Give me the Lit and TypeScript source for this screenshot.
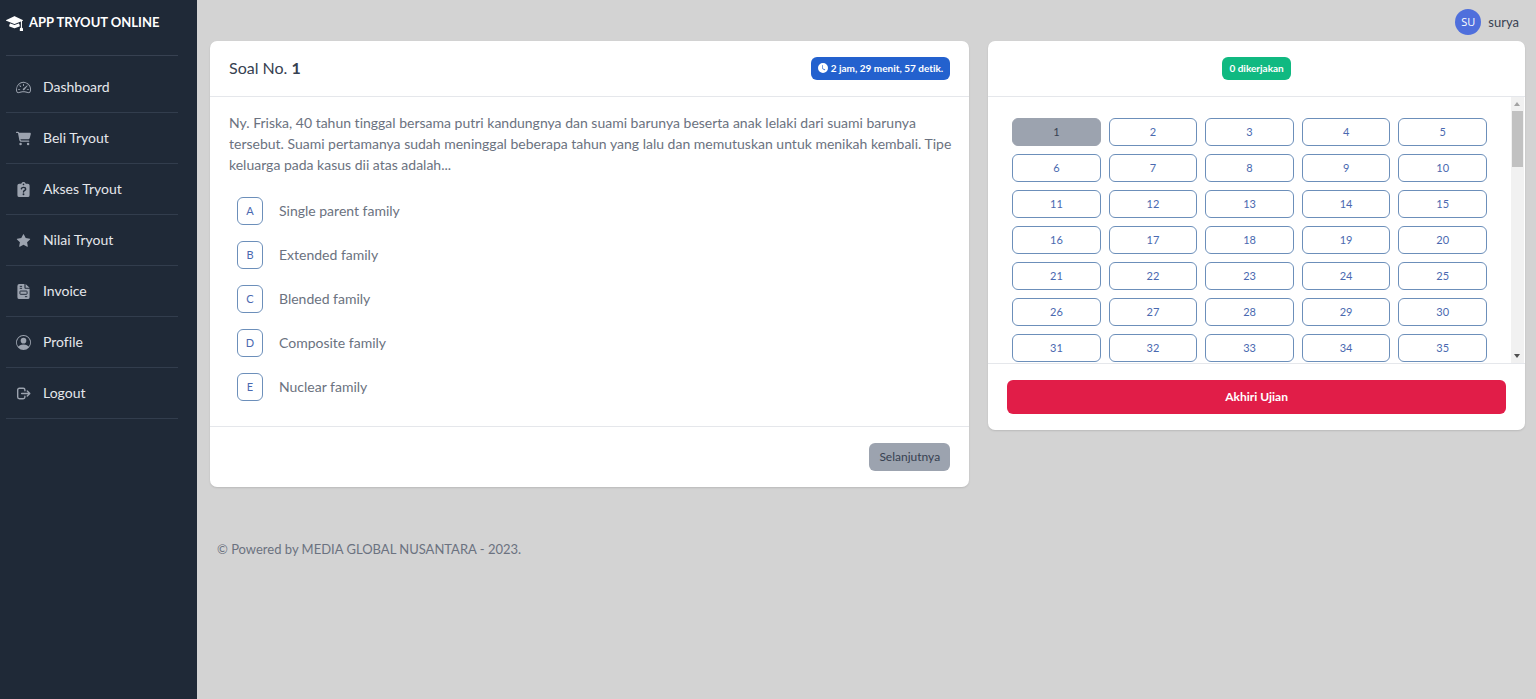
import { LitElement, html, css, svg, nothing } from "lit";
import { customElement, state } from "lit/decorators.js";
import { classMap } from "lit/directives/class-map.js";
import { styleMap } from "lit/directives/style-map.js";

const icons = {
  dashboard: svg`<svg class="icon" viewBox="0 0 16 16"><path d="M8 4a.5.5 0 0 1 .5.5V6a.5.5 0 0 1-1 0V4.500A.5.5 0 0 1 8 4zM3.732 5.732a.5.5 0 0 1 .707 0l.915.914a.5.5 0 1 1-.708.708l-.914-.915a.5.5 0 0 1 0-.707zM2 10a.5.5 0 0 1 .5-.5h1.586a.5.5 0 0 1 0 1H2.500A.5.5 0 0 1 2 10zm9.500 0a.5.5 0 0 1 .5-.5h1.500a.5.5 0 0 1 0 1H12a.5.5 0 0 1-.5-.5zm.754-4.246a.389.389 0 0 0-.527-.02L7.547 9.310a.910.910 0 1 0 1.302 1.258l3.434-4.297a.389.389 0 0 0-.029-.518z"/><path fill-rule="evenodd" d="M0 10a8 8 0 1 1 15.547 2.661c-.442 1.253-1.845 1.602-2.932 1.250C11.309 13.488 9.475 13 8 13c-1.474 0-3.310.488-4.615.911-1.087.352-2.490.003-2.932-1.250A7.988 7.988 0 0 1 0 10zm8-7a7 7 0 0 0-6.603 9.329c.203.575.923.876 1.680.630C4.397 12.533 6.358 12 8 12s3.604.532 4.923.960c.757.245 1.477-.056 1.680-.631A7 7 0 0 0 8 3z"/></svg>`,
  cart: svg`<svg class="icon" viewBox="0 0 576 512"><path d="M0 24C0 10.7 10.7 0 24 0H69.5c22 0 41.5 12.8 50.6 32h411c26.3 0 45.5 25 38.6 50.4l-41 152.3c-8.5 31.4-37 53.3-69.5 53.3H170.7l5.4 28.5c2.2 11.3 12.1 19.5 23.6 19.5H488c13.3 0 24 10.7 24 24s-10.7 24-24 24H199.7c-34.6 0-64.3-24.6-70.7-58.5L77.4 54.5c-.7-3.8-4-6.5-7.900-6.500H24C10.7 48 0 37.300 0 24zM128 464a48 48 0 1 1 96 0 48 48 0 1 1 -96 0zm336-48a48 48 0 1 1 0 96 48 48 0 1 1 0-96z"/></svg>`,
  clipboard: svg`<svg class="icon" viewBox="0 0 16 16"><path fill-rule="evenodd" d="M5.600 1.800C6 .7 6.900 0 8 0s2 .7 2.400 1.800H12.500a2 2 0 0 1 2 2V14a2 2 0 0 1-2 2h-9a2 2 0 0 1-2-2V3.800a2 2 0 0 1 2-2zM8 1.600a.9.900 0 1 0 0 1.800.9.900 0 0 0 0-1.800z"/><path d="M5.700 7.200C6 6.100 6.700 5.700 8 5.700c1.300 0 2.300.8 2.300 1.900C10.300 9 8 9 8 10.700" fill="none" stroke="#1f2937" stroke-width="1.500" stroke-linecap="round"/><circle cx="8" cy="13" r="1" fill="#1f2937"/></svg>`,
  star: svg`<svg class="icon" viewBox="-1 -1 18 18"><path d="M3.612 15.443c-.386.198-.824-.149-.746-.592l.830-4.730L.173 6.765c-.329-.314-.158-.888.283-.950l4.898-.696L7.538.792c.197-.390.730-.390.927 0l2.184 4.327 4.898.696c.441.062.612.636.282.950l-3.522 3.356.830 4.730c.078.443-.360.790-.746.592L8 13.187l-4.389 2.256z"/></svg>`,
  invoice: svg`<svg class="icon" viewBox="0 0 16 16"><path d="M3.500 0H9v4a1 1 0 0 0 1 1h4.500v9a2 2 0 0 1-2 2h-9a2 2 0 0 1-2-2V2a2 2 0 0 1 2-2zM10.200 0l4.300 4h-4.300z"/><path d="M4 2.500h2.500M4 4.600h2.500M9.500 13.500H12" fill="none" stroke="#1f2937" stroke-width="1"/><rect x="4.200" y="7.500" width="7.600" height="3.500" rx=".6" fill="none" stroke="#1f2937"/></svg>`,
  profile: svg`<svg class="icon" viewBox="0 0 16 16"><path d="M11 6a3 3 0 1 1-6 0 3 3 0 0 1 6 0z"/><path fill-rule="evenodd" d="M0 8a8 8 0 1 1 16 0A8 8 0 0 1 0 8zm8-7a7 7 0 0 0-5.468 11.370C3.242 11.226 4.805 10 8 10s4.757 1.225 5.468 2.370A7 7 0 0 0 8 1z"/></svg>`,
  logout: svg`<svg class="icon" viewBox="0 0 16 16"><path d="M9.500 5V4.200a1.800 1.800 0 0 0-1.800-1.800H3.600a1.800 1.800 0 0 0-1.800 1.800v7.600a1.800 1.800 0 0 0 1.800 1.800h4.100a1.800 1.800 0 0 0 1.800-1.800V11M6 8h8.600M12 5.300L14.700 8 12 10.700" fill="none" stroke="currentColor" stroke-width="1.500" stroke-linecap="round" stroke-linejoin="round"/></svg>`,
  cap: svg`<svg class="cap" viewBox="0 0 16 16"><path d="M8.211 2.047a.5.5 0 0 0-.422 0l-7.500 3.500a.5.5 0 0 0 .025.917l7.500 3a.5.5 0 0 0 .372 0L14 7.140V13a1 1 0 0 0-1 1v2h3v-2a1 1 0 0 0-1-1V6.739l.686-.275a.5.5 0 0 0 .025-.917l-7.500-3.500Z"/><path d="M4.176 9.032a.5.5 0 0 0-.656.327l-.5 1.700a.5.5 0 0 0 .294.605l4.500 1.800a.5.5 0 0 0 .372 0l4.500-1.800a.5.5 0 0 0 .294-.605l-.5-1.700a.5.5 0 0 0-.656-.327L8 10.466 4.176 9.032Z"/></svg>`,
  clock: svg`<svg class="clock" viewBox="0 0 16 16"><path d="M16 8A8 8 0 1 1 0 8a8 8 0 0 1 16 0zM8 3.500a.5.5 0 0 0-1 0V9a.5.5 0 0 0 .252.434l3.500 2a.5.5 0 0 0 .496-.868L8 8.710V3.500z"/></svg>`,
};

const menu = [
  { icon: icons.dashboard, label: "Dashboard" },
  { icon: icons.cart, label: "Beli Tryout" },
  { icon: icons.clipboard, label: "Akses Tryout" },
  { icon: icons.star, label: "Nilai Tryout" },
  { icon: icons.invoice, label: "Invoice" },
  { icon: icons.profile, label: "Profile" },
  { icon: icons.logout, label: "Logout" },
];

const options = [
  { key: "A", text: "Single parent family" },
  { key: "B", text: "Extended family" },
  { key: "C", text: "Blended family" },
  { key: "D", text: "Composite family" },
  { key: "E", text: "Nuclear family" },
];

const PER_ROW = 5;
const TOTAL_ROWS = 30;
const VISIBLE_ROWS = 7;

@customElement("tryout-sidebar")
class TryoutSidebar extends LitElement {
  static styles = css`
    :host { display: block; background: #1f2937; color: #e5e7eb; padding: 0 19px 0 6px; }
    .brand {
      display: flex; align-items: center; gap: 6px; height: 56px; padding-bottom: 10px;
      box-sizing: border-box; font-size: 13px; font-weight: 700; color: #fff;
      text-decoration: none; white-space: nowrap; border-bottom: 1px solid #374151;
    }
    .cap { width: 17px; height: 17px; fill: currentColor; flex: none; }
    .nav { padding-top: 6px; }
    .item {
      display: flex; align-items: center; gap: 12px; height: 51px; padding-left: 10px;
      box-sizing: border-box; font-size: 14px; color: inherit; text-decoration: none;
      border-bottom: 1px solid #323d4d;
    }
    .item span, .brand span { padding-bottom: 2px; }
    .icon { width: 15px; height: 15px; fill: currentColor; color: #9ca3af; flex: none; }
  `;
  render() {
    return html`
      <a class="brand" href="#">${icons.cap}<span>APP TRYOUT ONLINE</span></a>
      <nav class="nav">
        ${menu.map((m) => html`<a class="item" href="#">${m.icon}<span>${m.label}</span></a>`)}
      </nav>
    `;
  }
}

/* Question picker that keeps only the rows in view in the DOM. */
@customElement("question-grid")
class QuestionGrid extends LitElement {
  static properties = { current: { type: Number } };
  declare current: number;
  @state() firstRow = 0;

  static styles = css`
    :host { display: flex; margin-right: 1px; }
    button { font: inherit; cursor: pointer; box-sizing: border-box; }
    .numbers { flex: 1; display: grid; grid-template-columns: repeat(5, minmax(0, 1fr)); gap: 8px; padding: 21px 24px 1px; }
    .number { height: 28px; padding: 0 0 2px; border: 1px solid #6c8fba; border-radius: 6px; background: #fff; color: #4a69b0; font-size: 11px; }
    .selected { background: #9ca3af; border-color: #9ca3af; color: #374151; }
    .bar { width: 13px; display: flex; flex-direction: column; background: #f1f1f1; }
    .arrow { height: 14px; padding: 0; border: 0; background: none; display: grid; place-items: center; }
    .arrow svg { width: 6px; height: 4px; }
    .up { fill: #a3a3a3; }
    .down { fill: #505050; }
    .track { flex: 1; display: flex; flex-direction: column; padding: 0 1px; }
    .thumb { background: #c1c1c1; }
  `;

  private scrollRows(delta: number) {
    this.firstRow = Math.max(0, Math.min(TOTAL_ROWS - VISIBLE_ROWS, this.firstRow + delta));
  }

  private onWheel(e: WheelEvent) {
    e.preventDefault();
    this.scrollRows(Math.sign(e.deltaY));
  }

  private pick(n: number) {
    this.dispatchEvent(new CustomEvent("pick", { detail: n }));
  }

  render() {
    const numbers = Array.from({ length: VISIBLE_ROWS * PER_ROW }, (_, i) => this.firstRow * PER_ROW + i + 1);
    return html`
      <div class="numbers" @wheel=${this.onWheel}>
        ${numbers.map((n) => html`<button
          class=${classMap({ number: true, selected: n === this.current })}
          aria-current=${n === this.current ? "true" : nothing}
          @click=${() => this.pick(n)}>${n}</button>`)}
      </div>
      <div class="bar">
        <button class="arrow up" aria-label="Naik" @click=${() => this.scrollRows(-1)}><svg viewBox="0 0 6 4"><path d="M0 4l3-4 3 4z"/></svg></button>
        <div class="track">
          <div style=${styleMap({ flexGrow: String(this.firstRow) })}></div>
          <div class="thumb" style=${styleMap({ flexGrow: String(VISIBLE_ROWS) })}></div>
          <div style=${styleMap({ flexGrow: String(TOTAL_ROWS - VISIBLE_ROWS - this.firstRow) })}></div>
        </div>
        <button class="arrow down" aria-label="Turun" @click=${() => this.scrollRows(1)}><svg viewBox="0 0 6 4"><path d="M0 0l3 4 3-4z"/></svg></button>
      </div>
    `;
  }
}

@customElement("app-root")
class AppRoot extends LitElement {
  @state() current = 1;
  @state() answer = "";

  static styles = css`
    :host {
      display: grid; grid-template-columns: 197px minmax(0, 1fr); min-height: 100vh;
      background: #d3d3d3; color: #6b7280; font-family: Lato, "Open Sans", sans-serif; font-size: 14px;
      font-variant-ligatures: none;
    }
    button { font: inherit; cursor: pointer; box-sizing: border-box; }
    .main { padding: 0 11px 0 13px; }
    .topbar { display: flex; justify-content: flex-end; align-items: center; gap: 7px; height: 41px; padding: 2px 6px 0 0; box-sizing: border-box; color: #374151; font-size: 13px; }
    .avatar { width: 26px; height: 26px; border-radius: 50%; background: #4f6fdc; color: #fff; display: grid; place-items: center; font-family: "Open Sans", sans-serif; font-size: 11px; }
    .columns { display: grid; grid-template-columns: repeat(12, minmax(0, 1fr)); gap: 19px; align-items: start; }
    .card { background: #fff; border-radius: 7px; box-shadow: 0 1px 2px rgba(0, 0, 0, 0.12); overflow: hidden; }
    .question { grid-column: span 7; }
    .navigator { grid-column: span 5; }
    .head { display: flex; align-items: center; justify-content: space-between; height: 56px; padding: 0 19px; box-sizing: border-box; border-bottom: 1px solid #e5e7eb; }
    .head.centered { justify-content: center; }
    .title { margin: 0; padding-bottom: 2px; font-size: 16px; font-weight: 400; color: #374151; }
    .badge { display: flex; align-items: center; gap: 3px; height: 23px; padding: 0 7px 1px; box-sizing: border-box; border-radius: 6px; color: #fff; font-size: 10px; font-weight: 700; }
    .timer { background: #2361ce; }
    .done { background: #10b981; }
    .clock { width: 10px; height: 10px; fill: currentColor; }
    .body { padding: 15px 16px 25px 19px; }
    .text { margin: 0 0 22px; line-height: 21px; }
    .options { list-style: none; margin: 0; padding: 0 8px; display: grid; gap: 16px; }
    .option { display: flex; align-items: center; gap: 16px; }
    .option label { padding-bottom: 2px; }
    .key { width: 26px; height: 28px; padding: 0 0 1px; border: 1px solid #6c8fba; border-radius: 6px; background: #fff; color: #4a69b0; font-size: 11px; }
    .selected { background: #9ca3af; border-color: #9ca3af; color: #374151; }
    .foot { display: flex; justify-content: flex-end; padding: 16px 19px; border-top: 1px solid #e5e7eb; }
    .next { height: 28px; padding: 0 10px 2px; border: 0; border-radius: 6px; background: #9ca3af; color: #374151; font-size: 12px; }
    .finish { width: 100%; height: 34px; padding: 0 0 2px; border: 0; border-radius: 6px; background: #e11d48; color: #fff; font-size: 12px; font-weight: 700; }
    .footer { padding: 53px 7px 20px; line-height: 18px; font-size: 13px; }
  `;

  render() {
    return html`
      <tryout-sidebar></tryout-sidebar>
      <main class="main">
        <header class="topbar"><span class="avatar">SU</span><span>surya</span></header>
        <div class="columns">
          <section class="card question">
            <div class="head">
              <h1 class="title">Soal No. <b>${this.current}</b></h1>
              <span class="badge timer">${icons.clock}2 jam, 29 menit, 57 detik.</span>
            </div>
            <div class="body">
              <p class="text">Ny. Friska, 40 tahun tinggal bersama putri kandungnya dan suami barunya beserta anak lelaki dari suami barunya tersebut. Suami pertamanya sudah meninggal beberapa tahun yang lalu dan memutuskan untuk menikah kembali. Tipe keluarga pada kasus dii atas adalah...</p>
              <ul class="options">
                ${options.map((o) => html`<li class="option">
                  <button id="option-${o.key}" class=${classMap({ key: true, selected: this.answer === o.key })} @click=${() => (this.answer = o.key)}>${o.key}</button>
                  <label for="option-${o.key}">${o.text}</label>
                </li>`)}
              </ul>
            </div>
            <div class="foot"><button class="next" @click=${() => this.current++}>Selanjutnya</button></div>
          </section>
          <section class="card navigator">
            <div class="head centered"><span class="badge done">${this.answer ? 1 : 0} dikerjakan</span></div>
            <question-grid .current=${this.current} @pick=${(e: CustomEvent<number>) => (this.current = e.detail)}></question-grid>
            <div class="foot"><button class="finish">Akhiri Ujian</button></div>
          </section>
        </div>
        <footer class="footer">© Powered by MEDIA GLOBAL NUSANTARA - 2023.</footer>
      </main>
    `;
  }
}
